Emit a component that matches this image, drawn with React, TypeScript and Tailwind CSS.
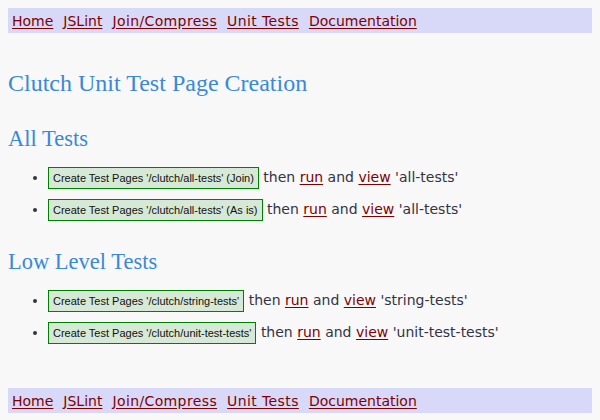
import React from "react";

const verdana = { fontFamily: '"DejaVu Sans", Verdana, sans-serif' };

function Nav() {
  const links: [string, string][] = [
    ["Home", ""],
    ["JSLint", ""],
    ["Join/Compress", "tracking-[0.38px]"],
    ["Unit Tests", "tracking-[0.4px]"],
    ["Documentation", ""],
  ];
  return (
    <div className="flex h-[25px] items-center gap-[10px] bg-[#d8d8f8] pl-[4px] text-[14px] leading-[18px]" style={verdana}>
      {links.map(([l, c]) => (
        <a key={l} href="#" className={"text-[#800000] underline decoration-[#800000] underline-offset-[2px] " + c}>
          {l}
        </a>
      ))}
    </div>
  );
}

function Item({ label, name }: { label: string; name: string }) {
  return (
    <li className="mb-[9px] text-[14px] leading-[22px] text-[#333344]" style={verdana}>
      <span
        className="inline-block h-[22px] border border-[#008000] bg-[#d6e8d6] px-[4px] text-[11px] leading-[20px] text-[#111111]"
        style={{ fontFamily: '"Liberation Sans", Arial, sans-serif' }}
      >
        {label}
      </span>{" "}
      then{" "}
      <a href="#" className="text-[#800000] underline underline-offset-[2px]">run</a> and{" "}
      <a href="#" className="text-[#800000] underline underline-offset-[2px]">view</a> '{name}'
    </li>
  );
}

export default function App() {
  return (
    <div className="min-h-[420px] bg-[#f8f8f8] p-[8px]">
      <Nav />
      <h1
        className="mt-[36px] text-[24px] leading-[28px] text-[#3a88d8]"
        style={{ fontFamily: '"Liberation Serif", "Times New Roman", serif' }}
      >
        Clutch Unit Test Page Creation
      </h1>
      <h2
        className="mt-[29px] text-[22.5px] leading-[26px] text-[#3a88d8]"
        style={{ fontFamily: '"Liberation Serif", "Times New Roman", serif' }}
      >
        All Tests
      </h2>
      <ul className="mt-[14px] list-disc pl-[40px] marker:text-[#333344]">
        <Item label="Create Test Pages '/clutch/all-tests' (Join)" name="all-tests" />
        <Item label="Create Test Pages '/clutch/all-tests' (As is)" name="all-tests" />
      </ul>
      <h2
        className="mt-[28px] text-[22.5px] leading-[26px] text-[#3a88d8]"
        style={{ fontFamily: '"Liberation Serif", "Times New Roman", serif' }}
      >
        Low Level Tests
      </h2>
      <ul className="mt-[14px] list-disc pl-[40px] marker:text-[#333344]">
        <Item label="Create Test Pages '/clutch/string-tests'" name="string-tests" />
        <Item label="Create Test Pages '/clutch/unit-test-tests'" name="unit-test-tests" />
      </ul>
      <div className="mt-[44px]">
        <Nav />
      </div>
    </div>
  );
}
